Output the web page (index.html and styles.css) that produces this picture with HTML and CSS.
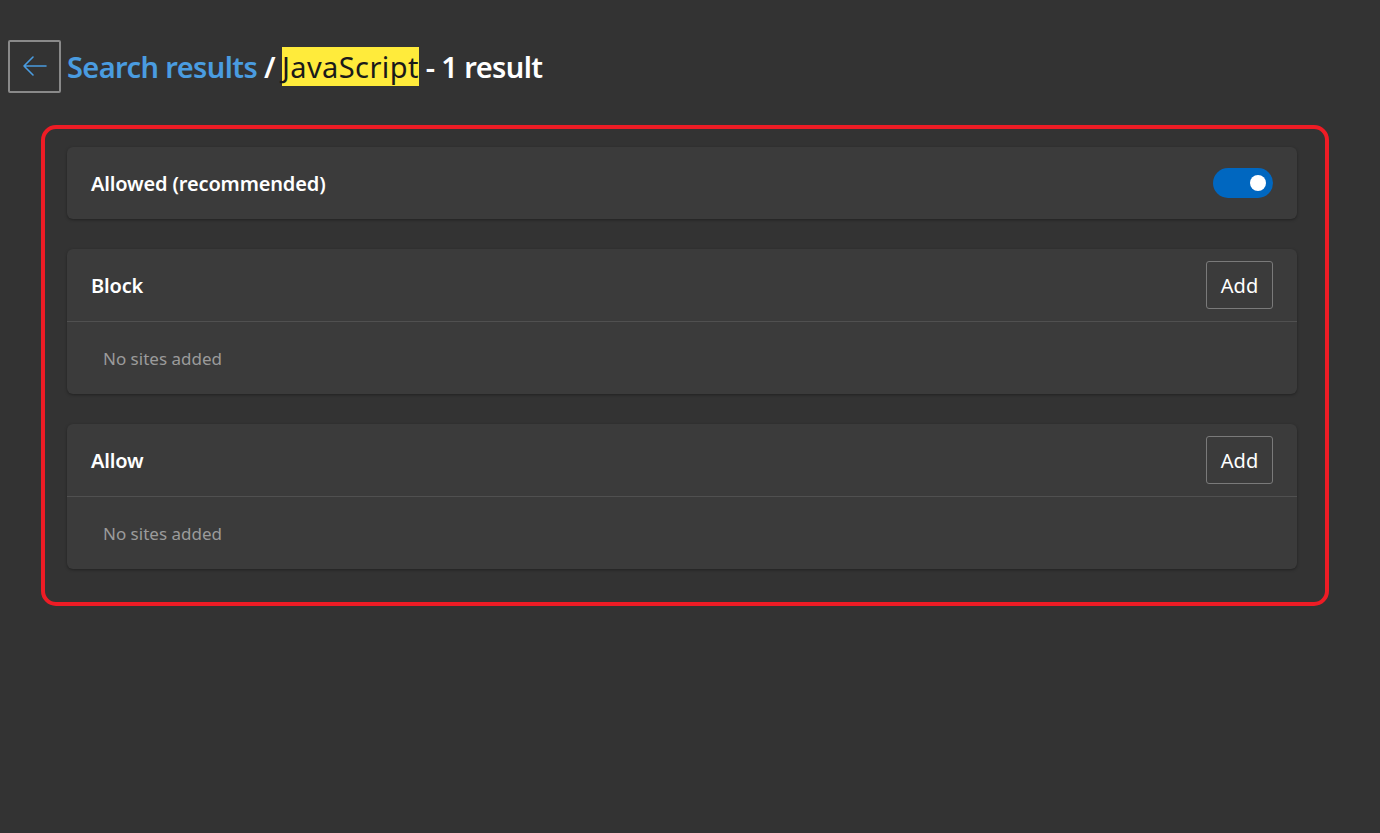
FILE: index.html
```html
<!DOCTYPE html>
<html lang="en">
<head>
<meta charset="utf-8">
<title>JavaScript</title>
<link rel="stylesheet" href="styles.css">
</head>
<body>
<header class="title-bar">
  <button class="back-btn" aria-label="Back">
    <svg width="26" height="22" viewBox="0 0 26 22" fill="none" stroke="#4a9ce0" stroke-width="1.6" stroke-linecap="round" stroke-linejoin="round">
      <path d="M24 11H2M11 2L2 11l9 9"/>
    </svg>
  </button>
  <h1 class="title"><span class="crumb">Search results</span> / <mark class="hl">JavaScript</mark> - 1 result</h1>
</header>
<main class="frame">
  <section class="card single">
    <span class="card-title">Allowed (recommended)</span>
    <span class="toggle"><span class="knob"></span></span>
  </section>
  <section class="card">
    <div class="card-head">
      <span class="card-title">Block</span>
      <button class="add-btn">Add</button>
    </div>
    <div class="card-body">No sites added</div>
  </section>
  <section class="card">
    <div class="card-head">
      <span class="card-title">Allow</span>
      <button class="add-btn">Add</button>
    </div>
    <div class="card-body">No sites added</div>
  </section>
</main>
</body>
</html>
```
FILE: styles.css
```css
html, body {
  margin: 0;
  padding: 0;
  background: #333333;
  color: #ffffff;
  font-family: "Noto Sans", "Open Sans", sans-serif;
}
body {
  padding: 40px 0 0 8px;
  min-height: 833px;
  box-sizing: border-box;
}
.title-bar {
  display: flex;
  align-items: center;
  gap: 6px;
  height: 52px;
}
.back-btn {
  width: 53px;
  height: 53px;
  box-sizing: border-box;
  border: 2px solid #8a8a8a;
  border-radius: 2px;
  background: transparent;
  display: flex;
  align-items: center;
  justify-content: center;
  padding: 0;
  margin: 0;
}
.title {
  margin: 0;
  font-size: 29px;
  font-weight: 600;
  color: #ffffff;
  letter-spacing: -0.6px;
  white-space: nowrap;
}
.crumb {
  color: #4a9ce0;
}
.hl {
  background: #ffeb3b;
  color: #1a1a1a;
  font-weight: 400;
  letter-spacing: 0.4px;
  padding: 0;
}
.frame {
  margin: 33px 0 0 33px;
  width: 1288px;
  height: 481px;
  box-sizing: border-box;
  border: 4px solid #ee1c25;
  border-radius: 15px;
  padding: 18px 28px 0 22px;
  display: flex;
  flex-direction: column;
  gap: 30px;
}
.card {
  background: #3b3b3b;
  border-radius: 6px;
  box-shadow: 0 1px 3px rgba(0, 0, 0, 0.35);
}
.card.single {
  height: 72px;
  display: flex;
  align-items: center;
  justify-content: space-between;
  padding: 0 24px;
}
.card-title {
  font-size: 20px;
  font-weight: 600;
  letter-spacing: -0.15px;
  color: #ffffff;
}
.toggle {
  width: 60px;
  height: 30px;
  border-radius: 15px;
  background: #0067c0;
  position: relative;
  display: block;
}
.knob {
  position: absolute;
  right: 7px;
  top: 7px;
  width: 16px;
  height: 16px;
  border-radius: 50%;
  background: #ffffff;
}
.card-head {
  height: 72px;
  display: flex;
  align-items: center;
  justify-content: space-between;
  padding: 0 24px;
  border-bottom: 1px solid #505050;
}
.add-btn {
  width: 67px;
  height: 48px;
  box-sizing: border-box;
  background: transparent;
  border: 1px solid #7a7a7a;
  border-radius: 3px;
  color: #ffffff;
  font-family: "Noto Sans", "Open Sans", sans-serif;
  font-size: 20px;
  font-weight: 400;
  padding: 0;
}
.card-body {
  height: 72px;
  display: flex;
  align-items: center;
  padding: 0 36px;
  font-size: 17px;
  color: #9b9b9b;
}
```
